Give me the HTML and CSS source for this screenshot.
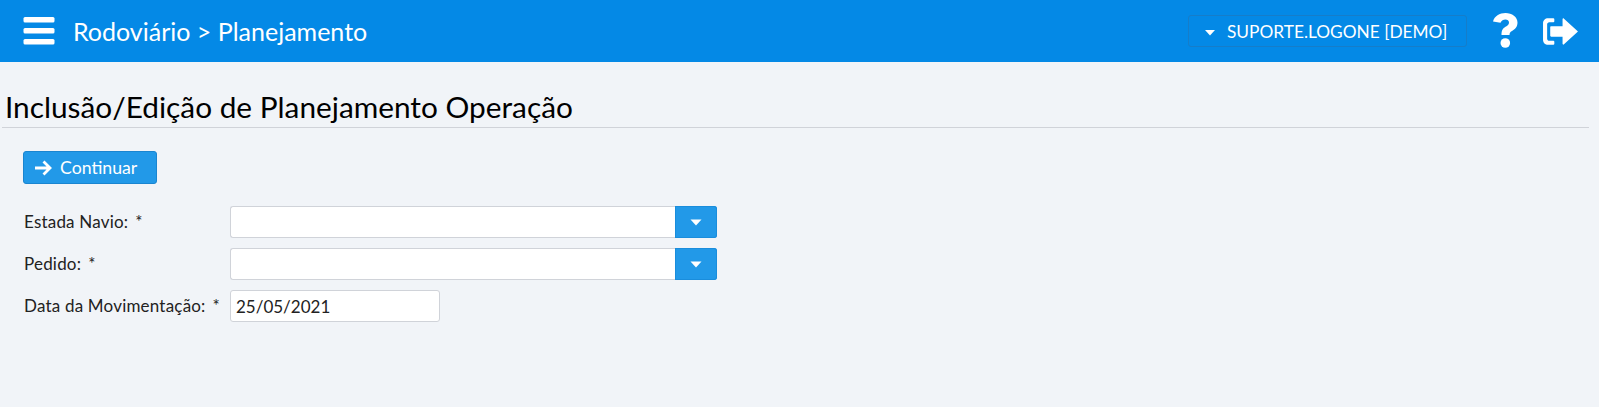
FILE: index.html
```html
<html>
  <head>
    <meta charset="utf-8">
    <link rel="stylesheet" href="styles.css">
  </head>
  <body>
    <div class="topbar">
      <svg class="menu-icon" viewBox="0 0 32 28">
        <rect x="0.5" y="0" width="31" height="5.5" rx="1.5"></rect>
        <rect x="0.5" y="11" width="31" height="5.5" rx="1.5"></rect>
        <rect x="0.5" y="22" width="31" height="5.5" rx="1.5"></rect>
      </svg>
      <div class="crumb">Rodoviário &gt; Planejamento</div>
      <div class="user-box">
        <svg class="caret-small" viewBox="0 0 12 7"><path d="M1 1h10L6 6.500z"></path></svg>
        <span>SUPORTE.LOGONE [DEMO]</span>
      </div>
      <svg class="help-icon" viewBox="0 0 26 36">
        <path d="M1 9.500C2.500 4 7.500 1 13.500 1 20 1 25.500 5 25.500 10.500c0 4.500-2.500 6.700-5.500 8.500-2 1.200-2.500 2-2.500 4H9.500c0-4.500 1.200-6.500 4-8.200 2-1.200 3.500-2.200 3.500-4.300 0-1.800-1.500-3-3.600-3-2.200 0-3.700 1.100-4.900 3.300z"></path>
        <circle cx="13.300" cy="31" r="4.800"></circle>
      </svg>
      <svg class="exit-icon" viewBox="0 0 36 28">
        <path d="M11 1H6C3 1 1 3 1 6v16c0 3 2 5 5 5h5a1 1 0 0 0 1-1v-2a1 1 0 0 0-1-1H7c-1 0-2-1-2-2V7c0-1 1-2 2-2h4a1 1 0 0 0 1-1V2a1 1 0 0 0-1-1z"></path>
        <path d="M9 9h11V2c0-.8.800-1 1.400-.5L35 14 21.400 26.500c-.6.500-1.400.3-1.400-.5v-7H9c-.6 0-1-.4-1-1v-8c0-.6.400-1 1-1z"></path>
      </svg>
    </div>

    <h1 class="page-title">Inclusão/Edição de Planejamento Operação</h1>

    <div class="content">
      <button class="btn-continue">
        <svg class="arrow-icon" viewBox="0 0 18 16">
          <path d="M1 8h15M9.500 1.500l6.500 6.500-6.500 6.500"></path>
        </svg>
        Continuar
      </button>

      <div class="form">
        <div class="form-row">
          <label>Estada Navio:<span class="req">*</span></label>
          <div class="combo">
            <input class="combo-input" type="text">
            <div class="combo-btn"><svg viewBox="0 0 12 7"><path d="M.5.500h11L6 6.500z"></path></svg></div>
          </div>
        </div>
        <div class="form-row">
          <label>Pedido:<span class="req">*</span></label>
          <div class="combo">
            <input class="combo-input" type="text">
            <div class="combo-btn"><svg viewBox="0 0 12 7"><path d="M.5.500h11L6 6.500z"></path></svg></div>
          </div>
        </div>
        <div class="form-row">
          <label>Data da Movimentação:<span class="req">*</span></label>
          <input class="date-input" type="text" value="25/05/2021">
        </div>
      </div>
    </div>
  </body>
</html>
```

FILE: styles.css
```css
body {
  margin: 0;
  background-color: #f1f4f8;
  color: #222;
  font-family: Lato, "Open Sans", sans-serif;
  font-size: 17px;
  letter-spacing: 0.2px;
  overflow: hidden;
}
.topbar {
  display: flex;
  align-items: center;
  height: 62px;
  padding: 0 23px;
  background-color: #0489e6;
  color: white;
  letter-spacing: 0;
}
.menu-icon {
  width: 32px;
  height: 28px;
  margin-top: -1px;
  fill: white;
}
.crumb {
  flex: 1;
  margin-left: 18px;
  font-size: 25px;
}
.user-box {
  display: flex;
  align-items: center;
  box-sizing: border-box;
  width: 279px;
  height: 32px;
  padding-left: 15px;
  border: 1px solid #167dc9;
  border-radius: 3px;
  font-size: 17.300px;
}
.caret-small {
  width: 12px;
  height: 7px;
  margin-right: 11px;
  margin-top: 2px;
  fill: white;
}
.help-icon {
  width: 26px;
  height: 36px;
  margin-left: 25px;
  margin-top: -3px;
  fill: white;
}
.exit-icon {
  width: 37px;
  height: 29px;
  margin-left: 24px;
  margin-right: -3px;
  fill: white;
}
.page-title {
  margin: 0 10px 0 2px;
  padding: 25px 0 0 3px;
  height: 40px;
  border-bottom: 1px solid #d0d3d9;
  color: black;
  font-size: 29.800px;
  font-weight: normal;
  letter-spacing: 0;
  line-height: 40px;
}
.content {
  padding: 23px 23px 0;
}
.btn-continue {
  display: flex;
  align-items: center;
  box-sizing: border-box;
  width: 134px;
  height: 33px;
  padding: 0 0 0 10px;
  border: 1px solid #1a85d0;
  border-radius: 3px;
  background-color: #2299e8;
  color: white;
  font-family: inherit;
  font-size: 17.700px;
  letter-spacing: 0;
}
.arrow-icon {
  width: 18px;
  height: 16px;
  margin-right: 8px;
  fill: none;
  stroke: white;
  stroke-width: 2.800;
}
.form {
  margin-top: 22px;
}
.form-row {
  display: flex;
  align-items: center;
  margin-bottom: 10px;
}
.form-row label {
  width: 206px;
  padding-left: 1px;
  margin-top: -2px;
}
.req {
  margin-left: 7px;
}
.combo {
  display: flex;
  width: 487px;
  height: 32px;
}
.combo-input {
  flex: 1;
  box-sizing: border-box;
  min-width: 0;
  border: 1px solid #d0d3d9;
  border-right: none;
  border-radius: 3px 0 0 3px;
  background: white;
}
.combo-btn {
  display: flex;
  align-items: center;
  justify-content: center;
  width: 42px;
  border-radius: 0 3px 3px 0;
  background-color: #2299e8;
  box-shadow: inset 0 0 0 1px #1a8ddc;
}
.combo-btn svg {
  width: 12px;
  height: 7px;
  fill: white;
}
.date-input {
  box-sizing: border-box;
  width: 210px;
  height: 32px;
  padding: 0 5px;
  border: 1px solid #d0d3d9;
  border-radius: 3px;
  background: white;
  color: #222;
  font-family: inherit;
  font-size: 17px;
  letter-spacing: 0;
}
```
